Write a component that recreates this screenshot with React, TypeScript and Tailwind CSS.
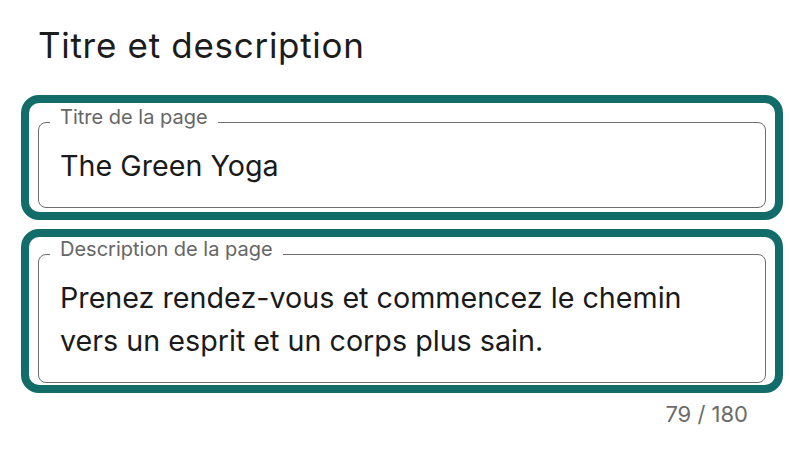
export default function App() {
  return (
    <div className="w-[790px] h-[450px] bg-white font-['Inter',sans-serif] pt-[28px] px-[7px] overflow-hidden">
      <h1 className="ml-[31px] h-[34px] text-[35px] leading-[34px] text-[#1c1c1c] font-normal tracking-[0.7px]">
        Titre et description
      </h1>

      <div className="mt-[33px] ml-[14px] w-[762px] h-[125px] border-[8px] border-[#126c69] rounded-[18px] px-[9px] pt-[4px] pb-[4px]">
        <fieldset className="border border-[#6e6e6e] rounded-[8px]">
          <legend className="ml-[11px] px-[10px] pb-[10px] text-[20px] leading-[20px] text-[#666666]">
            Titre de la page
          </legend>
          <div className="pl-[21px] pr-[21px] pt-[9px] pb-[21px] text-[28.7px] leading-[40px] text-[#1a1a1a]">
            The Green Yoga
          </div>
        </fieldset>
      </div>

      <div className="mt-[9px] ml-[14px] w-[762px] h-[164px] border-[8px] border-[#126c69] rounded-[18px] px-[9px] pt-[2px] pb-[2px]">
        <fieldset className="border border-[#6e6e6e] rounded-[8px]">
          <legend className="ml-[11px] px-[10px] pb-[10px] text-[20px] leading-[20px] text-[#666666]">
            Description de la page
          </legend>
          <div className="pl-[21px] pr-[21px] pt-[7px] pb-[20px] text-[28.7px] leading-[43px] text-[#1a1a1a]">
            Prenez rendez-vous et commencez le chemin
            <br />
            vers un esprit et un corps plus sain.
          </div>
        </fieldset>
      </div>

      <div className="mt-[9px] flex justify-end pr-[35px]">
        <span className="text-[22px] leading-[24px] text-[#6b6b6b]">79 / 180</span>
      </div>
    </div>
  );
}
